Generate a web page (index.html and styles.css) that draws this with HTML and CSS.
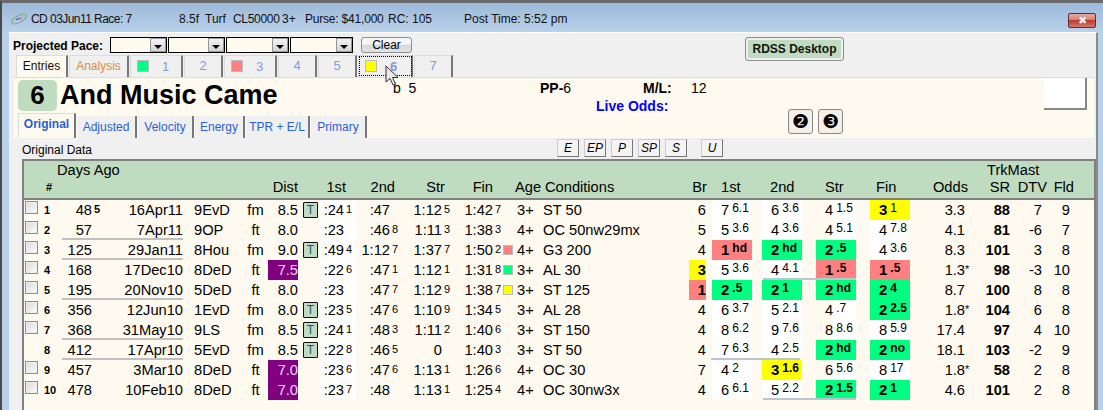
FILE: index.html
```html
<!DOCTYPE html>
<html lang="en">

<head>
    <meta charset="UTF-8">
    <title>And Music Came</title>
    <link rel="stylesheet" href="styles.css">
</head>

<body>
    <div class="window">
        <div class="titlebar">
            <svg class="app-icon" width="16" height="14" viewBox="0 0 16 14">
                <ellipse cx="8" cy="7" rx="8" ry="3.4" transform="rotate(-28 8 7)" fill="none" stroke="#78a878" stroke-width="1.3" stroke-dasharray="2 0.6"/>
                <path d="M5 8 L8 6" stroke="#4a5fd0" stroke-width="1.3"/>
                <path d="M8 7.4 L11 5.6" stroke="#c85ab0" stroke-width="1.2"/>
            </svg>
            <span class="t-race">CD 03Jun11 Race: 7</span>
            <span class="t-dist">8.5f</span>
            <span class="t-surf">Turf</span>
            <span class="t-class">CL50000</span>
            <span class="t-age">3+</span>
            <span class="t-purse">Purse: $41,000</span>
            <span class="t-rc">RC: 105</span>
            <span class="t-post">Post Time: 5:52 pm</span>
            <div class="close-btn">&#10006;</div>
        </div>

        <div class="client">
            <div class="pace-bar">
                <span class="pace-label">Projected Pace:</span>
                <div class="pace-select"><i></i></div>
                <div class="pace-select"><i></i></div>
                <div class="pace-select pace-wide"><i></i></div>
                <div class="pace-select pace-wide"><i></i></div>
                <div class="clear-btn">Clear</div>
                <div class="rdss-btn">RDSS Desktop</div>
            </div>

            <div class="race-tabs">
                <div class="race-tab tab-entries">Entries</div>
                <div class="race-tab tab-analysis">Analysis</div>
                <div class="race-tab tab-chip"><i class="chip green"></i>1</div>
                <div class="race-tab tab-plain">2</div>
                <div class="race-tab tab-chip"><i class="chip pink"></i>3</div>
                <div class="race-tab tab-plain">4</div>
                <div class="race-tab tab-plain">5</div>
                <div class="race-tab tab-chip tab-current"><i class="chip yellow"></i>6</div>
                <div class="race-tab tab-plain">7</div>
                <svg class="cursor" width="14" height="22" viewBox="0 0 14 22">
                    <path d="M1 1 L1 17 L5 13.5 L8 20 L10.5 19 L7.5 12.5 L13 12.5 Z" fill="#e8e8e8" stroke="#333" stroke-width="1"/>
                </svg>
            </div>

            <div class="panel">
                <div class="horse-head">
                    <div class="horse-num">6</div>
                    <div class="horse-name">And Music Came</div>
                    <div class="horse-info">
                        <span class="info-b">b&nbsp; 5</span>
                        <span class="info-pp"><b>PP-</b>6</span>
                        <b class="info-ml">M/L:</b>
                        <span class="info-mlv">12</span>
                        <b class="info-live">Live Odds:</b>
                    </div>
                    <div class="silk-box"></div>
                </div>
                <div class="panel-lower">
                    <div class="data-tabs">
                        <div class="data-tab tab-on">Original</div>
                        <div class="data-tab tab-adj">Adjusted</div>
                        <div class="data-tab tab-vel">Velocity</div>
                        <div class="data-tab tab-eng">Energy</div>
                        <div class="data-tab tab-tpr">TPR + E/L</div>
                        <div class="data-tab tab-pri">Primary</div>
                    </div>
                    <div class="num-btn">&#10103;</div>
                    <div class="num-btn">&#10104;</div>
                </div>
            </div>

            <div class="band">
                <span class="band-title">Original Data</span>
                <div class="call-btn btn-e">E</div>
                <div class="call-btn">EP</div>
                <div class="call-btn">P</div>
                <div class="call-btn">SP</div>
                <div class="call-btn">S</div>
                <div class="call-btn btn-u">U</div>
            </div>

            <div class="grid">
                <div class="grid-head">
                    <div class="head-top">
                        <span class="days-ago">Days Ago</span>
                        <span class="trkmast">TrkMast</span>
                    </div>
                    <div class="row head-row">
                        <span></span>
                        <b class="h-num">#</b>
                        <span></span><span></span><span></span><span></span>
                        <span class="r">Dist</span>
                        <span></span>
                        <span class="r h-1st">1st</span>
                        <span class="r h-2nd">2nd</span>
                        <span class="r h-str">Str</span>
                        <span class="r h-fin">Fin</span>
                        <span></span>
                        <span class="h-age">Age</span>
                        <span class="h-cond">Conditions</span>
                        <span class="r h-br">Br</span>
                        <span class="h-rp1">1st</span>
                        <span class="h-rp2">2nd</span>
                        <span class="h-rp3">Str</span>
                        <span class="h-rp4">Fin</span>
                        <span class="r h-odds">Odds</span>
                        <span class="r">SR</span>
                        <span class="r h-dtv">DTV</span>
                        <span class="r h-fld">Fld</span>
                    </div>
                </div>

                <div class="row">
                    <input class="cb" type="checkbox"><b class="num">1</b>
                    <span class="r days">48<sup class="bold">5</sup></span><span class="r date">16Apr11</span><span class="track">9EvD</span><span class="c">fm</span>
                    <span class="r">8.5</span><span><i class="turf">T</i></span>
                    <span class="r c1">:24<sup>1</sup></span><span class="r c2">:47<sup></sup></span><span class="r c3">1:12<sup>5</sup></span><span class="r c4">1:42<sup>7</sup></span><span></span>
                    <span>3+</span><span>ST 50</span><span class="r">6</span>
                    <span class="rp rp1 w">7<sup>6.1</sup></span><span class="rp rp2 w">6<sup>3.6</sup></span><span class="rp rp3 half">4<sup>1.5</sup></span><span class="rp rp3 bg-yellow"><b>3</b><sup>1</sup></span>
                    <span class="r odds">3.3<sup></sup></span><b class="r">88</b><span class="r">7</span><span class="r">9</span>
                </div>
                <div class="row">
                    <input class="cb" type="checkbox"><b class="num">2</b>
                    <span class="r days">57<sup></sup></span><span class="r date">7Apr11</span><span class="track">9OP</span><span class="c">ft</span>
                    <span class="r">8.0</span><span></span>
                    <span class="r c1">:23<sup></sup></span><span class="r c2">:46<sup>8</sup></span><span class="r c3">1:11<sup>3</sup></span><span class="r c4">1:38<sup>3</sup></span><span></span>
                    <span>4+</span><span>OC 50nw29mx</span><span class="r">5</span>
                    <span class="rp rp1 w">5<sup>3.6</sup></span><span class="rp rp2 w">4<sup>3.6</sup></span><span class="rp rp3 half">4<sup>5.1</sup></span><span class="rp rp3 w">4<sup>7.8</sup></span>
                    <span class="r odds">4.1<sup></sup></span><b class="r">81</b><span class="r">-6</span><span class="r">7</span>
                    <i class="rule rule-date"></i>
                </div>
                <div class="row">
                    <input class="cb" type="checkbox"><b class="num">3</b>
                    <span class="r days">125<sup></sup></span><span class="r date">29Jan11</span><span class="track">8Hou</span><span class="c">fm</span>
                    <span class="r">9.0</span><span><i class="turf">T</i></span>
                    <span class="r c1">:49<sup>4</sup></span><span class="r c2">1:12<sup>7</sup></span><span class="r c3">1:37<sup>7</sup></span><span class="r c4">1:50<sup>2</sup></span><span><i class="chip pink"></i></span>
                    <span>4+</span><span>G3 200</span><span class="r">4</span>
                    <span class="rp rp1 bg-pink"><b>1</b><sup class="bold">hd</sup></span><span class="rp rp2 bg-green"><b>2</b><sup class="bold">hd</sup></span><span class="rp rp3 bg-green"><b>2</b><sup class="bold">.5</sup></span><span class="rp rp3 w">4<sup>3.6</sup></span>
                    <span class="r odds">8.3<sup></sup></span><b class="r">101</b><span class="r">3</span><span class="r">8</span>
                    <i class="rule rule-date"></i>
                </div>
                <div class="row">
                    <input class="cb" type="checkbox"><b class="num">4</b>
                    <span class="r days">168<sup></sup></span><span class="r date">17Dec10</span><span class="track">8DeD</span><span class="c">ft</span>
                    <span class="r bg-purple">7.5</span><span></span>
                    <span class="r c1">:22<sup>6</sup></span><span class="r c2">:47<sup>1</sup></span><span class="r c3">1:12<sup>1</sup></span><span class="r c4">1:31<sup>8</sup></span><span><i class="chip green"></i></span>
                    <span>3+</span><span>AL 30</span><b class="r bg-yellow">3</b>
                    <span class="rp rp1 w">5<sup>3.6</sup></span><span class="rp rp2 w">4<sup>4.1</sup></span><span class="rp rp3 bg-pink"><b>1</b><sup class="bold">.5</sup></span><span class="rp rp3 bg-pink"><b>1</b><sup class="bold">.5</sup></span>
                    <span class="r odds">1.3<sup class="star">*</sup></span><b class="r">98</b><span class="r">-3</span><span class="r">10</span>
                    <i class="rule rule-calls"></i>
                </div>
                <div class="row">
                    <input class="cb" type="checkbox"><b class="num">5</b>
                    <span class="r days">195<sup></sup></span><span class="r date">20Nov10</span><span class="track">5DeD</span><span class="c">ft</span>
                    <span class="r">8.0</span><span></span>
                    <span class="r c1">:23<sup></sup></span><span class="r c2">:47<sup>7</sup></span><span class="r c3">1:12<sup>9</sup></span><span class="r c4">1:38<sup>7</sup></span><span><i class="chip yellow"></i></span>
                    <span>3+</span><span>ST 125</span><b class="r bg-pink">1</b>
                    <span class="rp rp1 bg-green"><b>2</b><sup class="bold">.5</sup></span><span class="rp rp2 bg-green"><b>2</b><sup class="bold">1</sup></span><span class="rp rp3 bg-green"><b>2</b><sup class="bold">hd</sup></span><span class="rp rp3 bg-green"><b>2</b><sup class="bold">4</sup></span>
                    <span class="r odds">8.7<sup></sup></span><b class="r">100</b><span class="r">8</span><span class="r">8</span>
                    <i class="rule rule-date"></i>
                </div>
                <div class="row">
                    <input class="cb" type="checkbox"><b class="num">6</b>
                    <span class="r days">356<sup></sup></span><span class="r date">12Jun10</span><span class="track">1EvD</span><span class="c">fm</span>
                    <span class="r">8.0</span><span><i class="turf">T</i></span>
                    <span class="r c1">:23<sup>5</sup></span><span class="r c2">:47<sup>6</sup></span><span class="r c3">1:10<sup>9</sup></span><span class="r c4">1:34<sup>5</sup></span><span></span>
                    <span>3+</span><span>AL 28</span><span class="r">4</span>
                    <span class="rp rp1 w">6<sup>3.7</sup></span><span class="rp rp2 w">5<sup>2.1</sup></span><span class="rp rp3 half">4<sup>.7</sup></span><span class="rp rp3 bg-green"><b>2</b><sup class="bold">2.5</sup></span>
                    <span class="r odds">1.8<sup class="star">*</sup></span><b class="r">104</b><span class="r">6</span><span class="r">8</span>
                </div>
                <div class="row">
                    <input class="cb" type="checkbox"><b class="num">7</b>
                    <span class="r days">368<sup></sup></span><span class="r date">31May10</span><span class="track">9LS</span><span class="c">fm</span>
                    <span class="r">8.5</span><span><i class="turf">T</i></span>
                    <span class="r c1">:24<sup>1</sup></span><span class="r c2">:48<sup>3</sup></span><span class="r c3">1:11<sup>2</sup></span><span class="r c4">1:40<sup>6</sup></span><span></span>
                    <span>3+</span><span>ST 150</span><span class="r">4</span>
                    <span class="rp rp1 w">8<sup>6.2</sup></span><span class="rp rp2 w">9<sup>7.6</sup></span><span class="rp rp3 half">8<sup>8.6</sup></span><span class="rp rp3 w">8<sup>5.9</sup></span>
                    <span class="r odds">17.4<sup></sup></span><b class="r">97</b><span class="r">4</span><span class="r">10</span>
                    <i class="rule rule-date"></i>
                </div>
                <div class="row">
                    <span></span><b class="num">8</b>
                    <span class="r days">412<sup></sup></span><span class="r date">17Apr10</span><span class="track">5EvD</span><span class="c">fm</span>
                    <span class="r">8.5</span><span><i class="turf">T</i></span>
                    <span class="r c1">:22<sup>8</sup></span><span class="r c2">:46<sup>5</sup></span><span class="r c3 zero">0<sup></sup></span><span class="r c4">1:40<sup>3</sup></span><span></span>
                    <span>3+</span><span>ST 50</span><span class="r">4</span>
                    <span class="rp rp1 w">7<sup>6.3</sup></span><span class="rp rp2 w">4<sup>2.5</sup></span><span class="rp rp3 bg-green"><b>2</b><sup class="bold">hd</sup></span><span class="rp rp3 bg-green"><b>2</b><sup class="bold">no</sup></span>
                    <span class="r odds">18.1<sup></sup></span><b class="r">103</b><span class="r">-2</span><span class="r">9</span>
                    <i class="rule rule-date"></i><i class="rule rule-rp"></i>
                </div>
                <div class="row">
                    <input class="cb" type="checkbox"><b class="num">9</b>
                    <span class="r days">457<sup></sup></span><span class="r date">3Mar10</span><span class="track">8DeD</span><span class="c">ft</span>
                    <span class="r bg-purple">7.0</span><span></span>
                    <span class="r c1">:23<sup>6</sup></span><span class="r c2">:47<sup>6</sup></span><span class="r c3">1:13<sup>1</sup></span><span class="r c4">1:26<sup>6</sup></span><span></span>
                    <span>4+</span><span>OC 30</span><span class="r">7</span>
                    <span class="rp rp1 w">4<sup>2</sup></span><span class="rp rp2 bg-yellow"><b>3</b><sup class="bold">1.6</sup></span><span class="rp rp3 half">6<sup>5.6</sup></span><span class="rp rp3 w">8<sup>17</sup></span>
                    <span class="r odds">1.8<sup class="star">*</sup></span><b class="r">58</b><span class="r">2</span><span class="r">8</span>
                </div>
                <div class="row">
                    <input class="cb" type="checkbox"><b class="num">10</b>
                    <span class="r days">478<sup></sup></span><span class="r date">10Feb10</span><span class="track">8DeD</span><span class="c">ft</span>
                    <span class="r bg-purple">7.0</span><span></span>
                    <span class="r c1">:23<sup>7</sup></span><span class="r c2">:48<sup></sup></span><span class="r c3">1:13<sup>1</sup></span><span class="r c4">1:25<sup>4</sup></span><span></span>
                    <span>4+</span><span>OC 30nw3x</span><span class="r">4</span>
                    <span class="rp rp1 w">6<sup>6.1</sup></span><span class="rp rp2 w">5<sup>2.2</sup></span><span class="rp rp3 bg-green"><b>2</b><sup class="bold">1.5</sup></span><span class="rp rp3 bg-green"><b>2</b><sup class="bold">1</sup></span>
                    <span class="r odds">4.6<sup></sup></span><b class="r">101</b><span class="r">2</span><span class="r">8</span>
                    <i class="rule rule-calls"></i>
                </div>
            </div>
        </div>
    </div>
</body>

</html>
```

FILE: styles.css
```css
:root {
    --cream: #fffaf0;
    --client: #f0f0f0;
    --green-head: #bfdcc0;
    --edge: #808080;
    --tab-blue: #7f9ce0;
    --link-blue: #2a5fd8;
}

* {
    box-sizing: border-box;
}

html,
body {
    margin: 0;
    height: 100%;
    overflow: hidden;
}

body {
    font-family: "Liberation Sans", Arial, sans-serif;
    font-size: 12px;
    color: #000;
}

.window {
    width: 1103px;
    height: 410px;
    display: flex;
    flex-direction: column;
    background: #b9d1ea;
    border-top: 3px solid #6a6a6a;
    border-left: 2px solid #4a4a4a;
}

/* title bar */
.titlebar {
    height: 29px;
    flex: none;
    display: flex;
    align-items: center;
    position: relative;
    padding-left: 9px;
    background: linear-gradient(#9db9d9, #b9d1ea);
}

.app-icon {
    flex: none;
    width: 16px;
    margin-top: 2px;
}

.t-race { margin-left: 4px; width: 148px; letter-spacing: -0.55px; }
.t-dist { width: 26px; }
.t-surf { width: 28px; }
.t-class { width: 49px; letter-spacing: -0.3px; }
.t-age { width: 23px; }
.t-purse { width: 83px; letter-spacing: -0.2px; }
.t-rc { width: 76px; }
.t-post { white-space: nowrap; }

.titlebar span {
    flex: none;
    white-space: nowrap;
    color: #111;
    transform: translateY(1px);
}

.close-btn {
    position: absolute;
    left: 1066px;
    top: 10px;
    width: 28px;
    height: 15px;
    border: 1px solid #5a3030;
    border-radius: 2px;
    background: linear-gradient(#e6a8a0 0, #dc8276 45%, #b83a2c 50%, #d8766a);
    color: #eee;
    font-size: 11px;
    line-height: 13px;
    text-align: center;
    text-shadow: 0 0 1px #555;
}

/* client area */
.client {
    flex: 1;
    margin: 0 5px 0 7px;
    background: var(--client);
    border-top: 1px solid #fff;
    border-right: 2px solid #8a8a8a;
}

.pace-bar {
    height: 22px;
    display: flex;
    align-items: flex-start;
    padding-top: 4px;
    padding-left: 4px;
}

.pace-label {
    width: 97px;
    font-weight: bold;
    line-height: 18px;
}

.pace-select {
    width: 57px;
    height: 16px;
    margin-right: 1px;
    background: var(--cream);
    border: 1px solid #000;
    position: relative;
}

.pace-wide {
    width: 63px;
}

.pace-select i {
    position: absolute;
    right: 0;
    top: 0;
    width: 16px;
    height: 14px;
    background: linear-gradient(#f4f4f4, #d4d4d4);
    border: 1px solid #999;
}

.pace-select i::after {
    content: "";
    position: absolute;
    left: 3px;
    top: 6px;
    border-left: 4px solid transparent;
    border-right: 4px solid transparent;
    border-top: 4px solid #000;
}

.clear-btn {
    width: 51px;
    height: 16px;
    margin-left: 7px;
    text-align: center;
    line-height: 14px;
    border: 1px solid #8e8e8e;
    border-radius: 3px;
    background: linear-gradient(#f6f6f6 45%, #d8d8d8 50%, #e4e4e4);
}

.rdss-btn {
    width: 99px;
    height: 24px;
    margin-left: 333px;
    font-weight: bold;
    text-align: center;
    line-height: 22px;
    border: 1px solid #8e8e8e;
    border-radius: 3px;
    background: var(--green-head);
    box-shadow: inset 0 0 0 2px #efefef;
    color: #111;
}

/* race tabs */
.race-tabs {
    height: 22px;
    display: flex;
    padding-left: 7px;
    position: relative;
}

.race-tab {
    height: 22px;
    margin-right: 1px;
    border: 1px solid #dcdcdc;
    border-bottom: none;
    border-right: 2px solid #777;
    line-height: 20px;
    text-align: center;
    color: var(--tab-blue);
    font-size: 13px;
}

.tab-entries { width: 52px; color: #111; font-size: 12px; background: var(--cream); }
.tab-analysis { width: 60px; color: #df8a45; font-size: 12px; }
.tab-plain { width: 39px; }

.tab-chip {
    width: 53px;
    display: flex;
    align-items: flex-start;
    gap: 13px;
    padding: 4px 0 0 6px;
    line-height: 14px;
}

.tab-chip .chip {
    width: 12px;
    height: 12px;
}

.tab-current {
    width: 55px;
    font-weight: bold;
    outline: 1px dotted #000;
    outline-offset: -2px;
}

.cursor {
    position: absolute;
    left: 376px;
    top: 10px;
    z-index: 3;
}

.chip {
    display: inline-block;
    width: 10px;
    height: 10px;
    border: 1px solid #bbb;
}

.chip.green { background: #00ff80; }
.chip.pink { background: #ff8080; }
.chip.yellow { background: #ffff00; }

/* horse panel */
.panel {
    height: 61px;
    margin-left: 5px;
    width: 1080px;
    background: var(--cream);
    border-top: 1px solid #dcdcdc;
}

.horse-head {
    height: 35px;
    display: flex;
}

.horse-num {
    width: 39px;
    height: 31px;
    margin: 2px 0 0 4px;
    background: var(--green-head);
    border-radius: 5px;
    font-size: 26px;
    font-weight: bold;
    text-align: center;
    line-height: 31px;
}

.horse-name {
    width: 336px;
    padding: 2px 0 0 3px;
    font-size: 27px;
    font-weight: bold;
    line-height: 31px;
    white-space: nowrap;
}

.horse-info {
    width: 651px;
    display: grid;
    grid-template-columns: 147px 56px 47px 48px 1fr;
    grid-template-rows: 20px 13px;
    font-size: 14px;
    line-height: 20px;
}

.info-pp { grid-column: 2; }
.info-ml { grid-column: 4; }
.info-mlv { grid-column: 5; }

.info-live {
    grid-column: 3 / 6;
    grid-row: 2;
    color: #0000ff;
    overflow: hidden;
    line-height: 17px;
    height: 13px;
}

.silk-box {
    width: 43px;
    height: 32px;
    background: #fff;
    border-right: 2px solid #888;
    border-bottom: 2px solid #888;
}

.panel-lower {
    height: 25px;
    display: flex;
}

.data-tabs {
    width: 774px;
    display: flex;
    padding-left: 4px;
    align-items: flex-end;
}

.data-tab {
    height: 22px;
    margin-right: 1px;
    background: var(--client);
    border-right: 2px solid #777;
    color: var(--link-blue);
    line-height: 22px;
    text-align: center;
}

.tab-on {
    width: 58px;
    height: 25px;
    background: var(--cream);
    font-weight: bold;
    line-height: 21px;
    border-left: 1px solid #ddd;
    border-top: 1px solid #ddd;
}

.tab-adj { width: 60px; }
.tab-vel { width: 56px; }
.tab-eng { width: 50px; }
.tab-tpr { width: 64px; }
.tab-pri { width: 56px; }

.num-btn {
    width: 25px;
    height: 25px;
    margin: -4px 5px 0 0;
    border: 1px solid #888;
    border-radius: 3px;
    background: #f4f0e8;
    font-family: "DejaVu Sans", sans-serif;
    font-size: 19px;
    line-height: 23px;
    text-align: center;
}

/* band above the grid */
.band {
    height: 21px;
    display: flex;
    gap: 5px;
    padding-left: 13px;
    align-items: flex-start;
}

.band-title {
    width: 535px;
    line-height: 24px;
}

.band-title + .call-btn {
    margin-left: -5px;
}

.call-btn {
    width: 22px;
    height: 18px;
    margin-top: 1px;
    border: 1px solid #ccc;
    border-right-color: #777;
    border-bottom-color: #777;
    background: #f4f4f4;
    font-style: italic;
    text-align: center;
    line-height: 17px;
}

.btn-u {
    margin-left: 9px;
}

/* data grid */
.grid {
    margin-left: 13px;
    width: 1074px;
    height: 251px;
    background: var(--cream);
    border: 2px solid var(--edge);
    border-bottom: none;
    font-size: 14.67px;
}

.grid-head {
    height: 39px;
    background: var(--green-head);
    border-bottom: 2px solid var(--edge);
}

.head-top {
    height: 17px;
    display: flex;
    line-height: 19px;
}

.days-ago { padding-left: 33px; width: 963px; }
.trkmast { white-space: nowrap; }

.row {
    display: grid;
    grid-template-columns: 20px 18px 40px 81px 60px 25px 30px 22px 36px 47px 52px 48px 14px 26px 146px 17px 46px 50px 54px 54px 61px 39px 32px 28px;
    grid-template-rows: 20px 0;
    line-height: 20px;
    white-space: nowrap;
}

.head-row {
    grid-template-rows: 18px;
    line-height: 18px;
}

.r { text-align: right; }
.c { text-align: center; }

.h-num { font-size: 11px; padding-left: 2px; }
.h-1st, .h-str, .h-fin { padding-right: 10px; }
.h-2nd { padding-right: 8px; }
.h-age { margin-left: -2px; }
.h-cond { padding-left: 2px; }
.h-br { margin-right: -1px; }
.h-rp1 { padding-left: 15px; }
.h-rp2 { padding-left: 18px; }
.h-rp3 { padding-left: 23px; }
.h-rp4 { padding-left: 20px; }
.h-odds { padding-right: 3px; }
.h-dtv { margin-right: -5px; }
.h-fld { margin-right: -4px; }

.cb {
    appearance: none;
    width: 13px;
    height: 13px;
    margin: 1px 0 0 1px;
    border: 1px solid #8e8f8f;
    background: linear-gradient(135deg, #d8d8d8, #fff);
    box-shadow: inset 0 0 0 1px #eee;
}

.num {
    font-size: 11px;
}

.track {
    padding-left: 11px;
}

.turf {
    display: block;
    width: 15px;
    height: 16px;
    margin: 2px 0 0 5px;
    background: var(--green-head);
    border: 1px solid #111;
    border-radius: 1px;
    color: #1f4f70;
    font-style: normal;
    font-size: 12px;
    line-height: 14px;
    text-align: center;
}

sup {
    display: inline-block;
    width: 10px;
    padding-left: 2px;
    font-size: 11px;
    line-height: 0;
    vertical-align: 2px;
    text-align: left;
}

sup.bold {
    font-weight: bold;
}

.star {
    width: 6px;
    padding-left: 0;
}

.odds sup {
    width: 6px;
}

.c1 { background: #fff; padding-right: 2px; }
.c2, .c3 { padding-right: 3px; }

.rp {
    padding-left: 9px;
}

.rp sup {
    width: auto;
    padding-left: 3px;
    font-size: 12px;
    vertical-align: 3px;
}

.rp b {
    font-size: 15px;
}

.rp1 { margin-left: 6px; }
.rp2 { margin-left: 10px; }
.rp3 { margin-left: 14px; }

.w { background: #fff; }
.half { background: linear-gradient(90deg, transparent 17px, #fff 17px); }

.bg-yellow { background: #ffff00; }
.bg-pink { background: #ff8080; }
.bg-green { background: #00ff80; }
.bg-purple { background: #800080; color: #e8d8e8; }

.rule {
    grid-row: 2;
    height: 2px;
    margin-top: -2px;
    position: relative;
    z-index: 1;
}

.rule-date {
    grid-column: 3 / 5;
    background: #c0c0c0;
}

.rule-calls {
    grid-column: 18 / 20;
    margin-left: 11px;
    background: #bcc6d2;
}

.rule-rp {
    grid-column: 17 / 19;
    margin: -2px 2px 0 5px;
    background: #bcc6d2;
}
```
